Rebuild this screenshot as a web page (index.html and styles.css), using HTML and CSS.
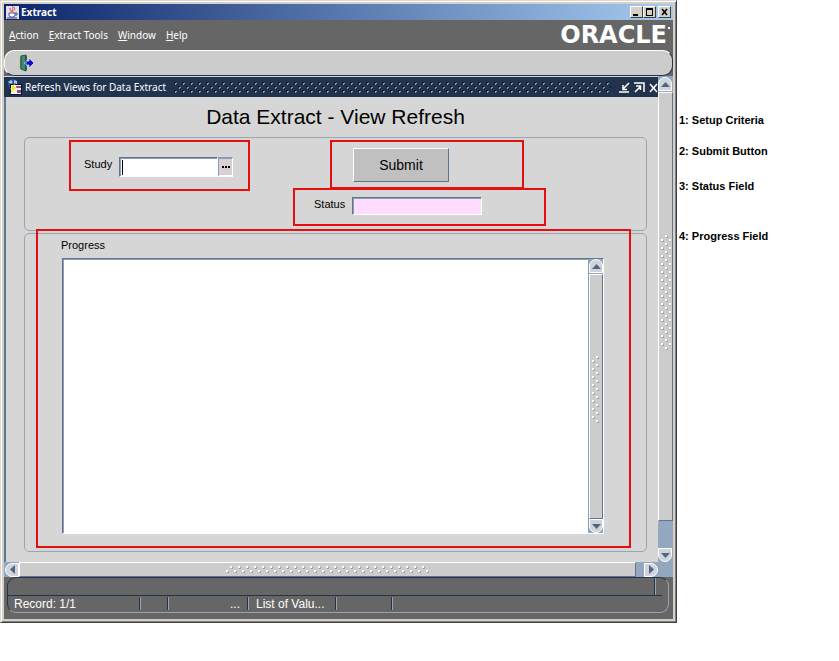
FILE: index.html
```html
<!DOCTYPE html>
<html lang="en">
<head>
<meta charset="utf-8">
<title>Extract</title>
<link rel="stylesheet" href="styles.css">
</head>
<body>
<svg class="defs" width="0" height="0" aria-hidden="true">
  <defs>
    <pattern id="dots-dark" width="8" height="8" patternUnits="userSpaceOnUse">
      <path d="M0 0h2v2h-2zM4 4h2v2h-2z" fill="#0b1629"/>
      <path d="M1 1h2v1h-1v1h-1zM5 5h2v1h-1v1h-1z" fill="#8b9db5"/>
    </pattern>
    <pattern id="dots-light" width="8" height="8" patternUnits="userSpaceOnUse">
      <path d="M5 1h2v2h-2zM1 5h2v2h-2z" fill="#a2a2a2"/>
      <path d="M4 0h2v2h-2zM0 4h2v2h-2z" fill="#fff"/>
    </pattern>
  </defs>
</svg>
<div class="page">
  <main class="window">
    <header class="titlebar">
      <svg class="icon-java" viewBox="0 0 13 13" aria-hidden="true">
        <rect width="13" height="13" fill="#e4e0ea"/>
        <path d="M6 0c3 2-2 3 1 6M8 1c2 2-1 3 0 4M4 2c-1 2 2 2 1 4" fill="none" stroke="#d8404c"/>
        <path d="M3 7h6v2q0 2-2 2h-2q-2 0-2-2zM9 7h2v2h-2" fill="#fff" stroke="#4a4a9c"/>
        <path d="M1 12h10" stroke="#38388c"/>
      </svg>
      <h1 class="titlebar-text">Extract</h1>
      <button class="win-btn" aria-label="Minimize"><svg viewBox="0 0 9 8"><path d="M1 6h5v2h-5z"/></svg></button>
      <button class="win-btn" aria-label="Maximize"><svg viewBox="0 0 9 8"><path d="M1 0h7v8h-7zM2 2v5h5v-5z" fill-rule="evenodd"/></svg></button>
      <button class="win-btn win-close" aria-label="Close"><svg viewBox="0 0 9 8"><path d="M2 1l5 6M7 1l-5 6" stroke="#000" stroke-width="1.600"/></svg></button>
    </header>

    <nav class="menubar">
      <a href="#"><u>A</u>ction</a>
      <a href="#"><u>E</u>xtract Tools</a>
      <a href="#"><u>W</u>indow</a>
      <a href="#"><u>H</u>elp</a>
      <span class="brand">ORACLE</span><span class="brand-mark"></span>
    </nav>

    <div class="toolbar">
      <button class="tool" aria-label="Exit">
        <svg viewBox="0 0 16 18">
          <path d="M1 1h9v15h-9z" fill="#d9c88a"/>
          <path d="M2 3h2v12h-2z" fill="#65908a"/>
          <path d="M3 2l5-1v16l-5-2z" fill="#3c8b80" stroke="#1d5650"/>
          <path d="M8 2v14" stroke="#0e3434"/>
          <path d="M6 9h1" stroke="#e8e8b0"/>
          <path d="M8 7h3v-3l5 5-5 5v-3h-3z" fill="#0a12c8" stroke="#e4e6f4" stroke-width=".7"/>
        </svg>
      </button>
    </div>

    <section class="mdi">
      <div class="pane">
        <div class="pane-title">
          <svg class="icon-form" viewBox="0 0 16 16" aria-hidden="true">
            <circle cx="6" cy="5" r="5" fill="#2c49a0"/>
            <path d="M1 3l3-2 2 2-2 2zM7 1l3 1v3l-3-1z" fill="#a6cbe0"/>
            <rect x="3.500" y="5.500" width="11" height="10" fill="#f3f3f3" stroke="#090f3a"/>
            <path d="M9 7h5v2h-5zM10 11h4v3h-4z" fill="#a04878"/>
            <path d="M8 4l-5 6h3l-3 5 7-7h-3z" fill="#f7e817"/>
          </svg>
          <h2>Refresh Views for Data Extract</h2>
          <svg class="grip-title" aria-hidden="true"><rect width="100%" height="100%" fill="url(#dots-dark)"/></svg>
          <button class="pane-btn" aria-label="Minimize form"><svg viewBox="0 0 11 11"><path d="M10 1l-6 6M4 3v4.500h4M0 10h10"/></svg></button>
          <button class="pane-btn" aria-label="Maximize form"><svg viewBox="0 0 11 11"><path d="M1 10l5-5M2 4h4.500v4M0 1h10v9"/></svg></button>
          <button class="pane-btn pane-close" aria-label="Close form"><svg viewBox="0 0 9 11"><path d="M1 2l7 8M8 2l-7 8"/></svg></button>
        </div>

        <form class="form">
          <h3 class="form-title">Data Extract - View Refresh</h3>
          <div class="group criteria">
            <div class="mark mark-study">
              <label for="study">Study</label>
              <span class="lov"><input id="study" type="text"><button type="button" aria-label="List of values"><i></i><i></i><i></i></button></span>
            </div>
            <div class="actions">
              <div class="mark mark-submit"><button type="button" class="submit">Submit</button></div>
              <div class="mark mark-status">
                <label for="status">Status</label>
                <input id="status" type="text" readonly>
              </div>
            </div>
          </div>
          <div class="group progress">
            <label for="progress">Progress</label>
            <div class="log">
              <textarea id="progress" readonly></textarea>
              <div class="log-scroll" aria-hidden="true">
                <span class="arrow arrow-up"><svg viewBox="0 0 9 5"><path d="M0 5l4.500-5 4.500 5z"/></svg></span>
                <span class="thumb thumb-v"><svg class="grip-log"><rect width="100%" height="100%" fill="url(#dots-light)"/></svg></span>
                <span class="arrow arrow-down"><svg viewBox="0 0 9 5"><path d="M0 0l4.500 5 4.500-5z"/></svg></span>
              </div>
            </div>
          </div>
        </form>
      </div>

      <div class="scroll-v" aria-hidden="true">
        <span class="arrow arrow-up"><svg viewBox="0 0 9 5"><path d="M0 5l4.500-5 4.500 5z"/></svg></span>
        <span class="thumb thumb-v"><svg class="grip-v"><rect width="100%" height="100%" fill="url(#dots-light)"/></svg></span>
        <span class="arrow arrow-down"><svg viewBox="0 0 9 5"><path d="M0 0l4.500 5 4.500-5z"/></svg></span>
      </div>
      <div class="scroll-h" aria-hidden="true">
        <span class="arrow arrow-left"><svg viewBox="0 0 5 9"><path d="M5 0l-5 4.500 5 4.500z"/></svg></span>
        <span class="thumb thumb-h"><svg class="grip-h"><rect width="100%" height="100%" fill="url(#dots-light)"/></svg></span>
        <span class="arrow arrow-right"><svg viewBox="0 0 5 9"><path d="M0 0l5 4.500-5 4.500z"/></svg></span>
      </div>
      <div class="corner"></div>
    </section>

    <footer class="status">
      <div class="status-frame">
        <div class="status-message"></div>
        <div class="status-cells">
          <span class="cell cell-record">Record: 1/1</span>
          <span class="cell cell-mode"></span>
          <span class="cell cell-more">...</span>
          <span class="cell cell-list">List of Valu...</span>
          <span class="cell cell-last"></span>
        </div>
      </div>
    </footer>
  </main>

  <aside class="notes">
    <p>1: Setup Criteria</p>
    <p>2: Submit Button</p>
    <p class="note-status">3: Status Field</p>
    <p class="note-progress">4: Progress Field</p>
  </aside>
</div>
</body>
</html>
```
FILE: styles.css
```css
* { box-sizing: border-box; }

body {
  margin: 0;
  background: #fff;
  color: #000;
  font: 11px/14px "Liberation Sans", Arial, sans-serif;
}

h1, h2, h3, p { margin: 0; font: inherit; }
button { padding: 0; border: 0; background: none; color: inherit; font: inherit; }
input, textarea { margin: 0; border-radius: 0; outline: 0; font: inherit; }
svg { display: block; }
.defs { position: absolute; }

.page { display: flex; align-items: flex-start; }

/* Window frame */
.window {
  flex: 1;
  min-width: 0;
  padding: 3px;
  border: 1px solid;
  border-color: #dcd8d0 #404040 #404040 #dcd8d0;
  background: #d4d0c8;
  box-shadow: inset 1px 1px #fff, inset -1px -1px #808080;
}

.titlebar {
  display: flex;
  align-items: center;
  height: 16px;
  padding: 0 2px;
  background: linear-gradient(90deg, #0a246a, #a6caf0);
  color: #fff;
}
.icon-java { width: 13px; height: 13px; }
.titlebar-text {
  flex: 1;
  padding-left: 2px;
  font: bold 10px/16px "Noto Sans", sans-serif;
}
.win-btn {
  width: 13px;
  height: 12px;
  padding: 1px;
  border: 1px solid;
  border-color: #fff #404040 #404040 #fff;
  background: #d4d0c8;
}
.win-btn svg { width: 9px; height: 8px; }
.win-close { margin-left: 2px; }

.menubar {
  display: flex;
  align-items: center;
  gap: 10px;
  height: 30px;
  padding: 0 3px 0 5px;
  background: #666;
  color: #fff;
  font: 10px/14px "Noto Sans", sans-serif;
}
.menubar a { color: inherit; text-decoration: none; }
.brand {
  margin-left: auto;
  font: bold 24px/28px "DejaVu Sans", sans-serif;
}
.brand-mark {
  align-self: flex-start;
  width: 2px;
  height: 2px;
  margin: 7px 0 0 -9px;
  background: #fff;
}

.toolbar {
  display: flex;
  height: 26px;
  padding: 3px 13px;
  border: 1px solid;
  border-color: #fff #22334d #22334d #fff;
  border-radius: 10px;
  background: #ccc;
  box-shadow: 0 0 0 5px #666;
  clip-path: inset(0);
}
.tool svg { width: 16px; height: 18px; }

/* Document area */
.mdi {
  display: grid;
  grid-template-columns: minmax(0, 1fr) 15px;
  grid-template-rows: auto 15px;
  background: #d6d6d6;
}
.pane-title {
  display: flex;
  align-items: center;
  height: 21px;
  padding-left: 3px;
  border-top: 1px solid #d6d6d6;
  background: #22334d;
  color: #fff;
}
.icon-form { width: 16px; height: 16px; }
.pane-title h2 {
  padding-left: 2px;
  font: 10px/20px "Noto Sans", sans-serif;
}
.grip-title { flex: 1; min-width: 0; height: 11px; margin: 0 8px; }
.pane-btn { margin-right: 4px; }
.pane-btn svg { width: 11px; height: 11px; fill: none; stroke: #fff; stroke-width: 1.5; }
.pane-close { margin-right: 0; }
.pane-close svg { width: 9px; }

.form {
  padding: 0 11px 10px 18px;
  border-left: 2px solid #5f7690;
}
.form-title {
  text-align: center;
  font-size: 21px;
  line-height: 40px;
}
.group {
  position: relative;
  border: 1px solid #98a6b2;
  border-radius: 5px;
}
.criteria {
  display: flex;
  align-items: flex-start;
  gap: 43px;
  padding: 2px 0 4px 44px;
}
.mark { border: 2px solid #e60f0f; }
.mark-study {
  display: flex;
  align-items: flex-start;
  gap: 7px;
  width: 181px;
  height: 51px;
  padding: 15px 13px;
}
.lov { display: flex; }
input {
  border: 1px solid;
  border-color: #5f7690 #fff #fff #5f7690;
  box-shadow: inset 1px 1px #8b9db5;
}
#study {
  width: 99px;
  height: 20px;
  background: linear-gradient(#000, #000) 2px 2px / 1px 15px no-repeat #fff;
}
.lov button {
  display: flex;
  justify-content: center;
  align-items: center;
  gap: 1px;
  width: 15px;
  height: 20px;
  border: solid;
  border-width: 2px 1px 2px 1px;
  border-color: #8b9db5 #fff #fff #8b9db5;
  background: #d8d0d4;
}
.lov i { width: 2px; height: 2px; background: #000; }

.mark-submit {
  width: 194px;
  height: 49px;
  margin-left: 37px;
  padding: 6px 21px;
}
.submit {
  width: 96px;
  height: 34px;
  border: 1px solid;
  border-color: #fff #5f7690 #5f7690 #fff;
  background: #c0c0c0;
  font-size: 14px;
}
.mark-status {
  display: flex;
  gap: 7px;
  width: 253px;
  height: 38px;
  margin-top: -1px;
  padding: 7px 19px;
}
#status {
  width: 130px;
  height: 18px;
  background: #fddcfd;
}

.progress {
  margin-top: 2px;
  padding: 4px 42px 17px 36px;
}
.progress::after {
  content: "";
  position: absolute;
  inset: -5px 15px 3px 11px;
  border: 2px solid #e60f0f;
  pointer-events: none;
}
.progress label { display: block; margin-bottom: 6px; }
.log {
  display: flex;
  height: 276px;
  margin-left: 1px;
  border: 1px solid;
  border-color: #5f7690 #fff #fff #5f7690;
  box-shadow: inset 1px 1px #8b9db5;
  background: #fff;
}
textarea {
  flex: 1;
  min-width: 0;
  border: 0;
  background: transparent;
  resize: none;
}

/* Scroll bars */
.log-scroll, .scroll-v {
  display: flex;
  flex-direction: column;
  width: 15px;
  background: #94a7c1;
}
.log-scroll { border-left: 1px solid #8b9db5; }
.arrow {
  display: flex;
  flex: none;
  justify-content: center;
  align-items: center;
  width: 14px;
  height: 14px;
  border: 1px solid #fff;
  background: #d0d4da;
}
.arrow svg { width: 9px; height: 5px; fill: #526580; }
.arrow-up { border-radius: 7px 7px 0 0; }
.arrow-down { border-radius: 0 0 7px 7px; }
.arrow-left { border-radius: 7px 0 0 7px; }
.arrow-right { border-radius: 0 7px 7px 0; }
.arrow-left svg, .arrow-right svg { width: 5px; height: 9px; }
.thumb {
  display: flex;
  flex: 1;
  justify-content: center;
  align-items: center;
  border: 1px solid;
  border-color: #fff #5f7690 #5f7690 #fff;
  background: #ccc;
}
.thumb-v { margin-top: 1px; padding-bottom: 14px; }
.scroll-v { padding-top: 1px; }
.scroll-v .thumb { margin-bottom: 27px; padding-bottom: 28px; }
.grip-log { width: 8px; height: 68px; }
.grip-v { width: 10px; height: 116px; }
.grip-h { width: 204px; height: 8px; }
.scroll-h {
  display: flex;
  align-items: center;
  padding-left: 1px;
  background: #94a7c1;
}
.thumb-h { height: 15px; margin: 0 8px 0 0; }
.corner { background: #94a7c1; }

/* Status bar */
.status {
  height: 42px;
  padding: 0 4px 6px 3px;
  background: #666;
}
.status-frame {
  height: 36px;
  border: 1px solid;
  border-color: #22334d #9aa3b0 #9aa3b0 #22334d;
  border-radius: 9px;
}
.status-message {
  height: 18px;
  margin-right: 6px;
  border-bottom: 1px solid #22334d;
  background: linear-gradient(90deg, #22334d 50%, #9aa3b0 50%) right 6px top 0 / 2px 17px no-repeat;
}
.status-cells {
  display: flex;
  padding: 1px 0 0 6px;
  color: #fff;
  font-size: 12px;
}
.cell {
  height: 13px;
  border-right: 1px solid #9aa3b0;
  box-shadow: inset -1px 0 #22334d;
  white-space: nowrap;
}
.cell-record { width: 127px; }
.cell-mode { width: 28px; }
.cell-more { width: 80px; padding-right: 8px; text-align: right; }
.cell-list { width: 88px; padding-left: 7px; }
.cell-last { width: 56px; }

/* Callout legend */
.notes {
  width: 162px;
  padding: 113px 0 0 2px;
  font-weight: bold;
}
.notes p { margin-bottom: 17px; }
.notes .note-status { margin: 21px 0 36px; }
```
